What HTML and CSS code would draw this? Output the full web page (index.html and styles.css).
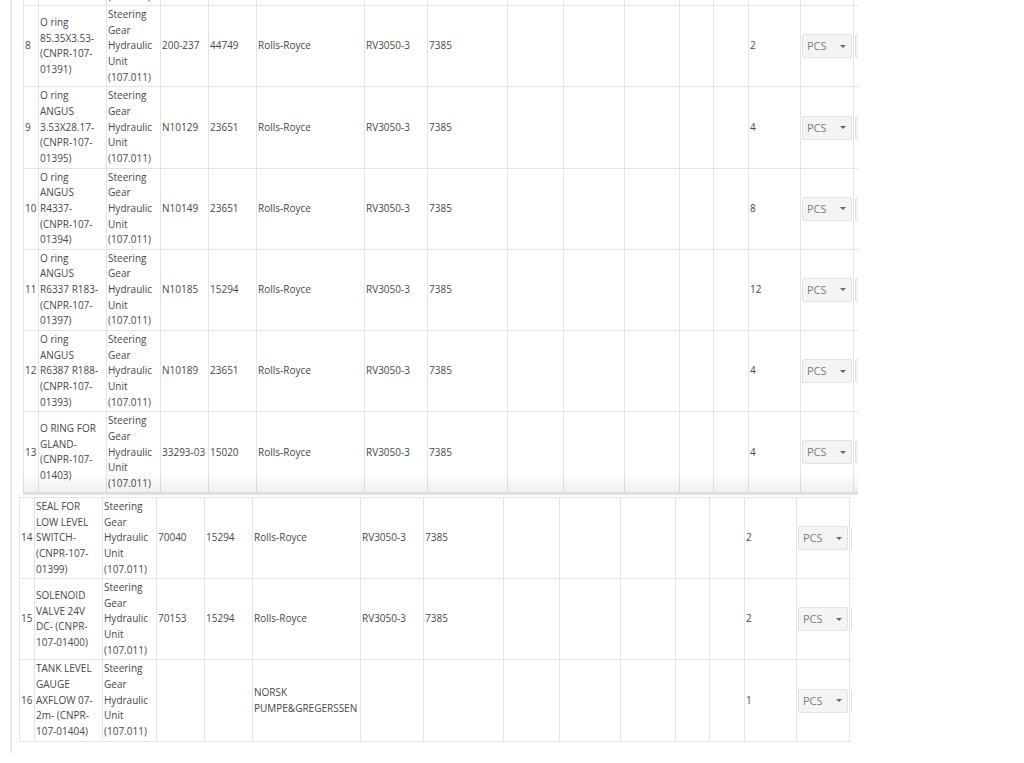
FILE: index.html
```html
<!DOCTYPE html>
<html lang="en">
<head>
<meta charset="utf-8">
<title>Spare parts list</title>
<link rel="stylesheet" href="styles.css">
</head>
<body>
<div class="page">
  <div class="placeholder"></div>
  <div class="grid-wrap">
    <table class="grid">
      <colgroup>
        <col class="c-no"><col class="c-desc"><col class="c-eq"><col class="c-part"><col class="c-draw"><col class="c-maker"><col class="c-model"><col class="c-serial"><col class="c-e1"><col class="c-e2"><col class="c-e3"><col class="c-e4"><col class="c-e5"><col class="c-qty"><col class="c-unit"><col class="c-next">
      </colgroup>
      <tbody>
        <tr>
          <td>14</td><td class="desc">SEAL FOR<br>LOW LEVEL<br>SWITCH-<br>(CNPR-107-<br>01399)</td><td>Steering Gear Hydraulic Unit (107.011)</td><td>70040</td><td>15294</td><td>Rolls-Royce</td><td>RV3050-3</td><td>7385</td><td></td><td></td><td></td><td></td><td></td><td>2</td>
          <td><div class="sel"><span>PCS</span><svg class="caret" width="6" height="3" viewBox="0 0 6 3"><path d="M0 0H6L3 3Z"/></svg></div></td><td><div class="sel"></div></td>
        </tr>
        <tr>
          <td>15</td><td class="desc">SOLENOID<br>VALVE 24V<br>DC- (CNPR-<br>107-01400)</td><td>Steering Gear Hydraulic Unit (107.011)</td><td>70153</td><td>15294</td><td>Rolls-Royce</td><td>RV3050-3</td><td>7385</td><td></td><td></td><td></td><td></td><td></td><td>2</td>
          <td><div class="sel"><span>PCS</span><svg class="caret" width="6" height="3" viewBox="0 0 6 3"><path d="M0 0H6L3 3Z"/></svg></div></td><td><div class="sel"></div></td>
        </tr>
        <tr>
          <td>16</td><td class="desc">TANK LEVEL<br>GAUGE<br>AXFLOW 07-<br>2m- (CNPR-<br>107-01404)</td><td>Steering Gear Hydraulic Unit (107.011)</td><td></td><td></td><td>NORSK PUMPE&amp;GREGERSSEN</td><td></td><td></td><td></td><td></td><td></td><td></td><td></td><td>1</td>
          <td><div class="sel"><span>PCS</span><svg class="caret" width="6" height="3" viewBox="0 0 6 3"><path d="M0 0H6L3 3Z"/></svg></div></td><td><div class="sel"></div></td>
        </tr>
      </tbody>
    </table>
  </div>

  <div class="drag">
    <table class="grid">
      <colgroup>
        <col class="c-no"><col class="c-desc"><col class="c-eq"><col class="c-part"><col class="c-draw"><col class="c-maker"><col class="c-model"><col class="c-serial"><col class="c-e1"><col class="c-e2"><col class="c-e3"><col class="c-e4"><col class="c-e5"><col class="c-qty"><col class="c-unit"><col class="c-next">
      </colgroup>
      <tbody>
        <tr>
          <td></td><td class="desc"></td><td>Steering Gear Hydraulic Unit (107.011)</td><td></td><td></td><td></td><td></td><td></td><td></td><td></td><td></td><td></td><td></td><td></td>
          <td></td><td></td>
        </tr>
        <tr>
          <td>8</td><td class="desc">O ring<br>85.35X3.53-<br>(CNPR-107-<br>01391)</td><td>Steering Gear Hydraulic Unit (107.011)</td><td>200-237</td><td>44749</td><td>Rolls-Royce</td><td>RV3050-3</td><td>7385</td><td></td><td></td><td></td><td></td><td></td><td>2</td>
          <td><div class="sel"><span>PCS</span><svg class="caret" width="6" height="3" viewBox="0 0 6 3"><path d="M0 0H6L3 3Z"/></svg></div></td><td><div class="sel"></div></td>
        </tr>
        <tr>
          <td>9</td><td class="desc">O ring<br>ANGUS<br>3.53X28.17-<br>(CNPR-107-<br>01395)</td><td>Steering Gear Hydraulic Unit (107.011)</td><td>N10129</td><td>23651</td><td>Rolls-Royce</td><td>RV3050-3</td><td>7385</td><td></td><td></td><td></td><td></td><td></td><td>4</td>
          <td><div class="sel"><span>PCS</span><svg class="caret" width="6" height="3" viewBox="0 0 6 3"><path d="M0 0H6L3 3Z"/></svg></div></td><td><div class="sel"></div></td>
        </tr>
        <tr>
          <td>10</td><td class="desc">O ring<br>ANGUS<br>R4337-<br>(CNPR-107-<br>01394)</td><td>Steering Gear Hydraulic Unit (107.011)</td><td>N10149</td><td>23651</td><td>Rolls-Royce</td><td>RV3050-3</td><td>7385</td><td></td><td></td><td></td><td></td><td></td><td>8</td>
          <td><div class="sel"><span>PCS</span><svg class="caret" width="6" height="3" viewBox="0 0 6 3"><path d="M0 0H6L3 3Z"/></svg></div></td><td><div class="sel"></div></td>
        </tr>
        <tr>
          <td>11</td><td class="desc">O ring<br>ANGUS<br>R6337 R183-<br>(CNPR-107-<br>01397)</td><td>Steering Gear Hydraulic Unit (107.011)</td><td>N10185</td><td>15294</td><td>Rolls-Royce</td><td>RV3050-3</td><td>7385</td><td></td><td></td><td></td><td></td><td></td><td>12</td>
          <td><div class="sel"><span>PCS</span><svg class="caret" width="6" height="3" viewBox="0 0 6 3"><path d="M0 0H6L3 3Z"/></svg></div></td><td><div class="sel"></div></td>
        </tr>
        <tr>
          <td>12</td><td class="desc">O ring<br>ANGUS<br>R6387 R188-<br>(CNPR-107-<br>01393)</td><td>Steering Gear Hydraulic Unit (107.011)</td><td>N10189</td><td>23651</td><td>Rolls-Royce</td><td>RV3050-3</td><td>7385</td><td></td><td></td><td></td><td></td><td></td><td>4</td>
          <td><div class="sel"><span>PCS</span><svg class="caret" width="6" height="3" viewBox="0 0 6 3"><path d="M0 0H6L3 3Z"/></svg></div></td><td><div class="sel"></div></td>
        </tr>
        <tr>
          <td>13</td><td class="desc">O RING FOR<br>GLAND-<br>(CNPR-107-<br>01403)</td><td>Steering Gear Hydraulic Unit (107.011)</td><td>33293-03</td><td>15020</td><td>Rolls-Royce</td><td>RV3050-3</td><td>7385</td><td></td><td></td><td></td><td></td><td></td><td>4</td>
          <td><div class="sel"><span>PCS</span><svg class="caret" width="6" height="3" viewBox="0 0 6 3"><path d="M0 0H6L3 3Z"/></svg></div></td><td><div class="sel"></div></td>
        </tr>
      </tbody>
    </table>
  </div>
</div>
</body>
</html>
```

FILE: styles.css
```css
* { box-sizing: border-box; }

html, body {
  margin: 0;
  background: #fff;
}

body {
  font-family: "Open Sans", "Liberation Sans", sans-serif;
  font-size: 10px;
  color: #474747;
  height: 763px;
  overflow: hidden;
}

.page {
  position: relative;
  margin-left: 10px;
  border-left: 2px solid #e8e8e8;
  padding: 0 0 11px 7px;
}

.placeholder {
  height: 497px;
}

.grid-wrap {
  width: 833px;
  overflow: hidden;
}

.grid {
  border-collapse: collapse;
  table-layout: fixed;
  width: 930px;
}

.grid td {
  border: 1px solid #e4e4e4;
  padding: 1px;
  line-height: 15.64px;
  vertical-align: middle;
  text-align: left;
  overflow: hidden;
}

.grid td.desc {
  white-space: nowrap;
}

.c-no { width: 15px; }
.c-desc { width: 68px; }
.c-eq { width: 54px; }
.c-part { width: 48px; }
.c-draw { width: 48px; }
.c-maker { width: 108px; }
.c-model { width: 63px; }
.c-serial { width: 80px; }
.c-e1 { width: 56px; }
.c-e2 { width: 61px; }
.c-e3 { width: 55px; }
.c-e4 { width: 34px; }
.c-e5 { width: 35px; }
.c-qty { width: 52px; }
.c-unit { width: 53px; }
.c-next { width: 100px; }

.sel {
  display: flex;
  align-items: center;
  justify-content: space-between;
  width: 50px;
  height: 24px;
  padding: 0 5px 0 4px;
  background: #f4f4f4;
  border: 1px solid #e2e2e2;
  border-radius: 2px;
  font-size: 11px;
  line-height: 22px;
  color: #7c7c7c;
}

.caret {
  display: block;
  fill: #666;
}

.drag {
  position: absolute;
  left: 11px;
  top: -76px;
  width: 835px;
  overflow: hidden;
  background: #fff;
  border-bottom: 2px solid #e2e2e2;
}

.drag::after {
  content: "";
  position: absolute;
  left: 0;
  right: 0;
  bottom: 0;
  height: 22px;
  background: linear-gradient(rgba(0, 0, 0, 0), rgba(0, 0, 0, 0.06));
  pointer-events: none;
}
```
